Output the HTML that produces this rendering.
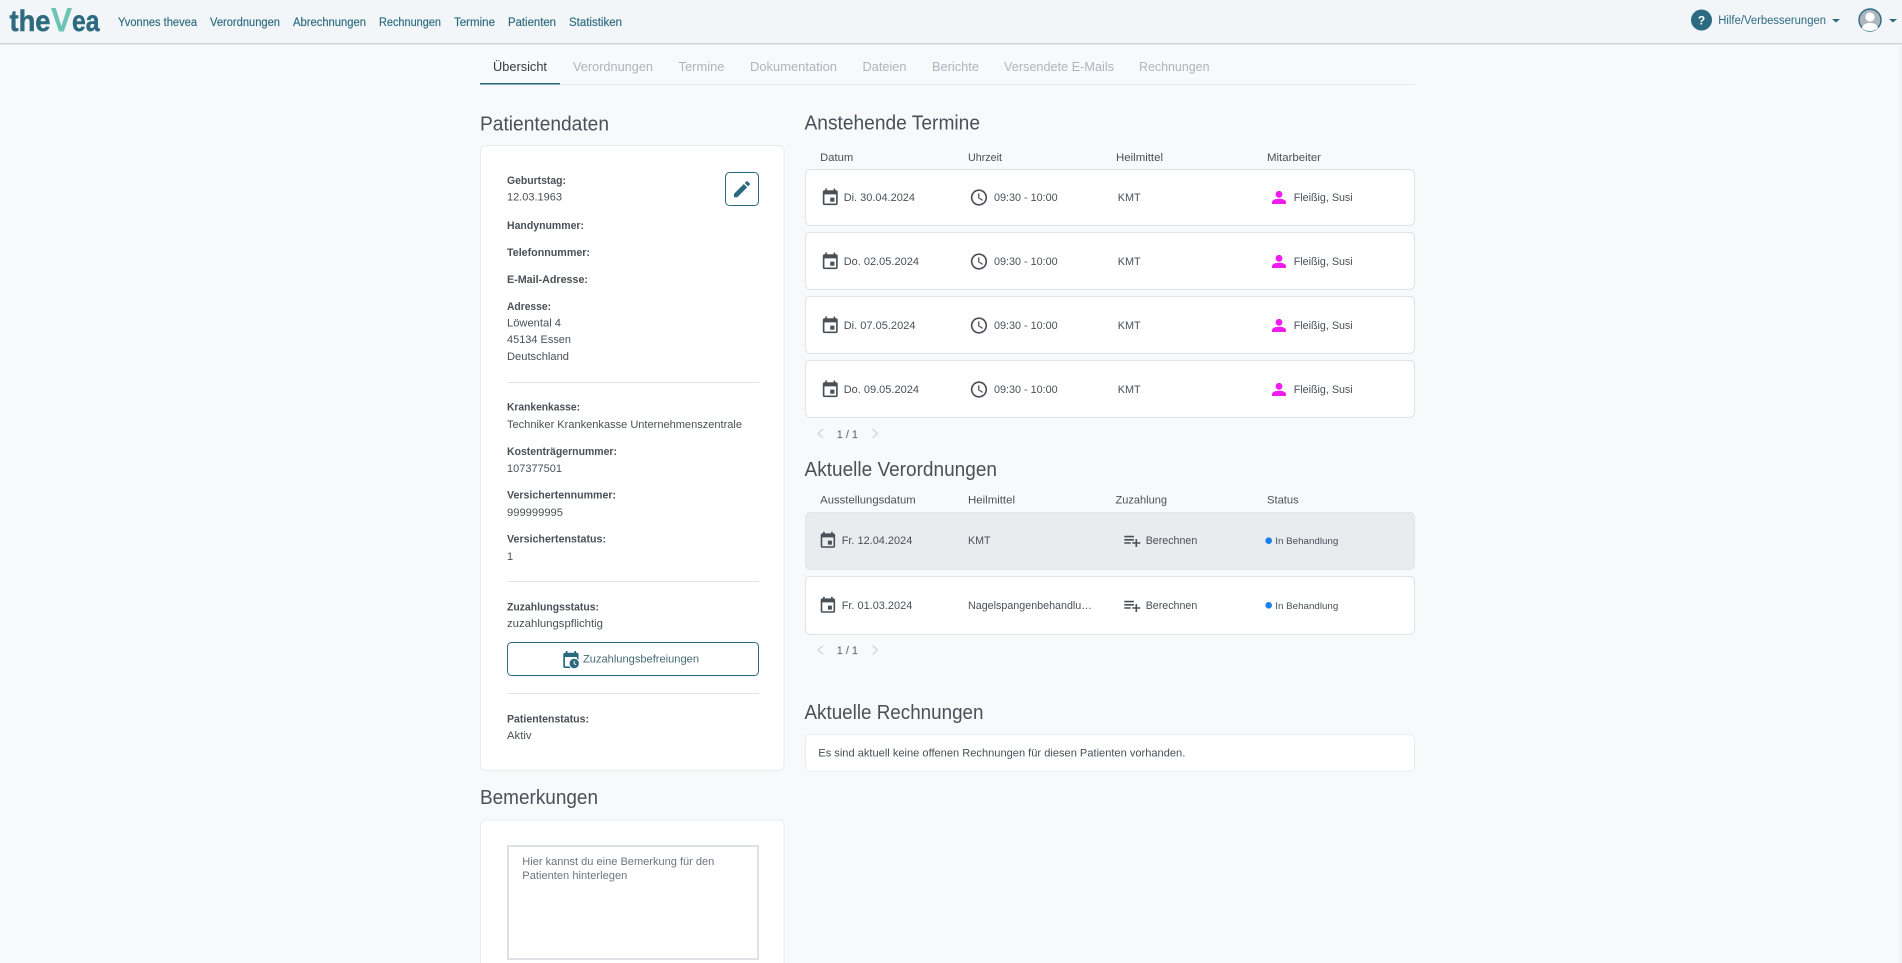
<!DOCTYPE html>
<html lang="de">
<head>
<meta charset="utf-8">
<title>thevea – Patient</title>
<style>
html,body{margin:0;padding:0;width:1902px;height:963px;overflow:hidden;background:#f8f9fb}
svg{display:block;position:absolute;left:0;top:0}
text{font-family:"Liberation Sans",sans-serif;white-space:pre}
.nav{font-size:11.5px;fill:#2b6a7e;stroke:#2b6a7e;stroke-width:.15px}
.tab{font-size:13px;fill:#adb5bd}
.h{font-size:20px;fill:#495057}
.l{font-size:11px;font-weight:bold;fill:#495057}
.v{font-size:11px;fill:#495057}
.th{font-size:11px;fill:#495057}
.pg{font-size:11px;fill:#6c757d;stroke:#6c757d;stroke-width:.15px}
.st{font-size:9.6px;fill:#495057}
.ph{font-size:11px;fill:#6c757d}
.card{fill:#fff;stroke:#e9ecef;stroke-width:1}
.row{fill:#fff;stroke:#e0e3e8;stroke-width:1}
.ic{fill:#495057}
.chev{fill:none;stroke:#ced4da;stroke-width:1.2}
</style>
</head>
<body>
<svg width="1902" height="963" viewBox="0 0 1902 963" xmlns="http://www.w3.org/2000/svg">
<rect x="0" y="0" width="1902" height="963" fill="#f8f9fb"/>
<rect x="1899" y="45" width="3" height="918" fill="#f1f3f5"/>

<!-- top nav -->
<rect x="0" y="0" width="1902" height="43" fill="#f2f6f9"/>
<rect x="0" y="43" width="1902" height="1" fill="#cfd4d8"/>
<rect x="0" y="44" width="1902" height="1" fill="#e6e9ec"/>

<text x="9.500" y="31" fill="#2e6a80" stroke="#2e6a80" stroke-width=".5" textLength="41" lengthAdjust="spacingAndGlyphs" style="font-size:30px;font-weight:bold">the</text>
<text x="51.500" y="31" fill="#6ec4b4" stroke="#6ec4b4" stroke-width="1" textLength="20" lengthAdjust="spacingAndGlyphs" style="font-size:43px">v</text>
<text x="72" y="31" fill="#2e6a80" stroke="#2e6a80" stroke-width=".5" textLength="27.500" lengthAdjust="spacingAndGlyphs" style="font-size:30px;font-weight:bold">ea</text>

<text class="nav" x="118" y="26" textLength="79" lengthAdjust="spacingAndGlyphs">Yvonnes thevea</text>
<text class="nav" x="210" y="26" textLength="70" lengthAdjust="spacingAndGlyphs">Verordnungen</text>
<text class="nav" x="293" y="26" textLength="73" lengthAdjust="spacingAndGlyphs">Abrechnungen</text>
<text class="nav" x="379" y="26" textLength="62" lengthAdjust="spacingAndGlyphs">Rechnungen</text>
<text class="nav" x="454" y="26" textLength="41" lengthAdjust="spacingAndGlyphs">Termine</text>
<text class="nav" x="508" y="26" textLength="48" lengthAdjust="spacingAndGlyphs">Patienten</text>
<text class="nav" x="569" y="26" textLength="53" lengthAdjust="spacingAndGlyphs">Statistiken</text>

<circle cx="1701.500" cy="20" r="10.500" fill="#2b6a80"/>
<text x="1701.500" y="24.500" text-anchor="middle" fill="#fff" style="font-size:12px;font-weight:bold">?</text>
<text class="nav" style="stroke:none" x="1718.300" y="24" textLength="107.700" lengthAdjust="spacingAndGlyphs">Hilfe/Verbesserungen</text>
<path d="M1832 19h8l-4 3.500z" fill="#2b6a7e"/>
<circle cx="1870" cy="20" r="11" fill="#adb5bd" stroke="#2b6a80" stroke-width="1.400"/>
<circle cx="1870" cy="17" r="4.600" fill="#fff"/>
<path d="M1862 28c1-4 4.500-5 8-5s7 1 8 5c-2 2-5 3-8 3s-6-1-8-3z" fill="#fff"/>
<path d="M1889 19h8l-4 3.500z" fill="#2b6a7e"/>

<!-- tabs -->
<rect x="480" y="84" width="935" height="1" fill="#e7e9ec"/>
<rect x="480" y="83" width="80" height="1.500" fill="#2b6a7e"/>
<text class="tab" style="fill:#343a40" x="493" y="71" textLength="54" lengthAdjust="spacingAndGlyphs">Übersicht</text>
<text class="tab" x="573" y="71" textLength="80" lengthAdjust="spacingAndGlyphs">Verordnungen</text>
<text class="tab" x="678.500" y="71" textLength="46" lengthAdjust="spacingAndGlyphs">Termine</text>
<text class="tab" x="750" y="71" textLength="87" lengthAdjust="spacingAndGlyphs">Dokumentation</text>
<text class="tab" x="862.500" y="71" textLength="44" lengthAdjust="spacingAndGlyphs">Dateien</text>
<text class="tab" x="932" y="71" textLength="47" lengthAdjust="spacingAndGlyphs">Berichte</text>
<text class="tab" x="1004" y="71" textLength="110" lengthAdjust="spacingAndGlyphs">Versendete E-Mails</text>
<text class="tab" x="1139" y="71" textLength="70.500" lengthAdjust="spacingAndGlyphs">Rechnungen</text>

<!-- Patientendaten -->
<text class="h" x="480" y="130.500" textLength="129" lengthAdjust="spacingAndGlyphs">Patientendaten</text>
<rect class="card" x="480.500" y="145.500" width="303.500" height="625" rx="5"/>

<text class="l" x="507" y="184" textLength="59" lengthAdjust="spacingAndGlyphs">Geburtstag:</text>
<text class="v" x="507" y="200.500" textLength="55" lengthAdjust="spacingAndGlyphs">12.03.1963</text>
<rect x="725.500" y="172.500" width="33" height="33" rx="4" fill="#fff" stroke="#2b6a7e" stroke-width="1"/>
<path transform="translate(731.300,178.500) scale(.89)" fill="#2b6a7e" d="M3 17.250V21h3.750L17.810 9.940l-3.750-3.750L3 17.250zM20.710 7.040c.39-.39.39-1.020 0-1.410l-2.340-2.340c-.39-.39-1.020-.39-1.410 0l-1.830 1.830 3.750 3.750 1.830-1.830z"/>
<text class="l" x="507" y="229" textLength="77" lengthAdjust="spacingAndGlyphs">Handynummer:</text>
<text class="l" x="507" y="256" textLength="83" lengthAdjust="spacingAndGlyphs">Telefonnummer:</text>
<text class="l" x="507" y="283" textLength="81" lengthAdjust="spacingAndGlyphs">E-Mail-Adresse:</text>
<text class="l" x="507" y="310" textLength="44" lengthAdjust="spacingAndGlyphs">Adresse:</text>
<text class="v" x="507" y="326.700" textLength="54" lengthAdjust="spacingAndGlyphs">Löwental 4</text>
<text class="v" x="507" y="343" textLength="64" lengthAdjust="spacingAndGlyphs">45134 Essen</text>
<text class="v" x="507" y="360" textLength="62" lengthAdjust="spacingAndGlyphs">Deutschland</text>
<rect x="507" y="382" width="252" height="1" fill="#e0e3e7"/>

<text class="l" x="507" y="410.700" textLength="73" lengthAdjust="spacingAndGlyphs">Krankenkasse:</text>
<text class="v" x="507" y="428" textLength="235" lengthAdjust="spacingAndGlyphs">Techniker Krankenkasse Unternehmenszentrale</text>
<text class="l" x="507" y="455" textLength="110" lengthAdjust="spacingAndGlyphs">Kostenträgernummer:</text>
<text class="v" x="507" y="472" textLength="55" lengthAdjust="spacingAndGlyphs">107377501</text>
<text class="l" x="507" y="498.700" textLength="109" lengthAdjust="spacingAndGlyphs">Versichertennummer:</text>
<text class="v" x="507" y="516" textLength="56" lengthAdjust="spacingAndGlyphs">999999995</text>
<text class="l" x="507" y="542.700" textLength="99" lengthAdjust="spacingAndGlyphs">Versichertenstatus:</text>
<text class="v" x="507" y="560">1</text>
<rect x="507" y="581" width="252" height="1" fill="#e0e3e7"/>

<text class="l" x="507" y="610.700" textLength="92" lengthAdjust="spacingAndGlyphs">Zuzahlungsstatus:</text>
<text class="v" x="507" y="627" textLength="96" lengthAdjust="spacingAndGlyphs">zuzahlungspflichtig</text>
<rect x="507.500" y="642.500" width="251" height="33" rx="4" fill="#fff" stroke="#2b6a7e" stroke-width="1"/>
<path transform="translate(560.700,650.200) scale(.85)" fill="#2b6a7e" d="M16 1v2H8V1H6v2H5c-1.110 0-1.990.9-1.990 2L3 19c0 1.100.89 2 2 2h14c1.100 0 2-.9 2-2V5c0-1.100-.9-2-2-2h-1V1h-2zm3 18H5V8h14v11z"/>
<circle cx="574.200" cy="663.500" r="5.200" fill="#2b6a7e" stroke="#fff" stroke-width="1"/>
<path d="M574.200 660.800v2.900l2 1" fill="none" stroke="#fff" stroke-width=".9"/>
<text class="v" style="fill:#456a78" x="583" y="662.700" textLength="116" lengthAdjust="spacingAndGlyphs">Zuzahlungsbefreiungen</text>
<rect x="507" y="693" width="252" height="1" fill="#e0e3e7"/>

<text class="l" x="507" y="722.700" textLength="82" lengthAdjust="spacingAndGlyphs">Patientenstatus:</text>
<text class="v" x="507" y="739" textLength="24.500" lengthAdjust="spacingAndGlyphs">Aktiv</text>

<!-- Bemerkungen -->
<text class="h" x="480" y="804" textLength="118" lengthAdjust="spacingAndGlyphs">Bemerkungen</text>
<rect class="card" x="480.500" y="820" width="303.500" height="160" rx="5"/>
<rect x="508" y="846" width="250" height="113" fill="#fff" stroke="#dee2e6" stroke-width="2"/>
<text class="ph" x="522.300" y="865" textLength="192" lengthAdjust="spacingAndGlyphs">Hier kannst du eine Bemerkung für den</text>
<text class="ph" x="522.300" y="879" textLength="105" lengthAdjust="spacingAndGlyphs">Patienten hinterlegen</text>

<!-- Anstehende Termine -->
<text class="h" x="804.500" y="129.500" textLength="175.500" lengthAdjust="spacingAndGlyphs">Anstehende Termine</text>
<text class="th" x="820.200" y="161" textLength="33" lengthAdjust="spacingAndGlyphs">Datum</text>
<text class="th" x="968" y="161" textLength="34" lengthAdjust="spacingAndGlyphs">Uhrzeit</text>
<text class="th" x="1116" y="161" textLength="47" lengthAdjust="spacingAndGlyphs">Heilmittel</text>
<text class="th" x="1267" y="161" textLength="54" lengthAdjust="spacingAndGlyphs">Mitarbeiter</text>

<rect class="row" x="805.500" y="169.500" width="609" height="56" rx="5"/>
<rect class="row" x="805.500" y="232.500" width="609" height="57" rx="5"/>
<rect class="row" x="805.500" y="296.500" width="609" height="57" rx="5"/>
<rect class="row" x="805.500" y="360.500" width="609" height="57" rx="5"/>

<!-- row 1 -->
<path class="ic" transform="translate(820.300,187.700) scale(.83)" d="M17 12h-5v5h5v-5zM16 1v2H8V1H6v2H5c-1.110 0-1.990.9-1.990 2L3 19c0 1.100.89 2 2 2h14c1.100 0 2-.9 2-2V5c0-1.100-.9-2-2-2h-1V1h-2zm3 18H5V8h14v11z"/>
<text class="v" x="843.700" y="201" textLength="71.300" lengthAdjust="spacingAndGlyphs">Di. 30.04.2024</text>
<path class="ic" transform="translate(969.200,187.700) scale(.815)" d="M11.990 2C6.470 2 2 6.480 2 12s4.470 10 9.990 10C17.520 22 22 17.520 22 12S17.520 2 11.990 2zM12 20c-4.420 0-8-3.580-8-8s3.580-8 8-8 8 3.580 8 8-3.580 8-8 8zm.5-13H11v6l5.250 3.150.75-1.230-4.500-2.670z"/>
<text class="v" x="994" y="201" textLength="63.700" lengthAdjust="spacingAndGlyphs">09:30 - 10:00</text>
<text class="v" x="1117.700" y="201" textLength="23" lengthAdjust="spacingAndGlyphs">KMT</text>
<circle cx="1279" cy="194.300" r="3.400" fill="#ef1cef"/>
<path d="M1272 204v-1.800c0-2.200 3-3.400 7-3.400s7 1.200 7 3.400v1.800z" fill="#ef1cef"/>
<text class="v" x="1293.700" y="201" textLength="59" lengthAdjust="spacingAndGlyphs">Fleißig, Susi</text>

<!-- row 2 -->
<path class="ic" transform="translate(820.300,251.700) scale(.83)" d="M17 12h-5v5h5v-5zM16 1v2H8V1H6v2H5c-1.110 0-1.990.9-1.990 2L3 19c0 1.100.89 2 2 2h14c1.100 0 2-.9 2-2V5c0-1.100-.9-2-2-2h-1V1h-2zm3 18H5V8h14v11z"/>
<text class="v" x="843.700" y="265" textLength="75.300" lengthAdjust="spacingAndGlyphs">Do. 02.05.2024</text>
<path class="ic" transform="translate(969.200,251.700) scale(.815)" d="M11.990 2C6.470 2 2 6.480 2 12s4.470 10 9.990 10C17.520 22 22 17.520 22 12S17.520 2 11.990 2zM12 20c-4.420 0-8-3.580-8-8s3.580-8 8-8 8 3.580 8 8-3.580 8-8 8zm.5-13H11v6l5.250 3.150.75-1.230-4.500-2.670z"/>
<text class="v" x="994" y="265" textLength="63.700" lengthAdjust="spacingAndGlyphs">09:30 - 10:00</text>
<text class="v" x="1117.700" y="265" textLength="23" lengthAdjust="spacingAndGlyphs">KMT</text>
<circle cx="1279" cy="258.300" r="3.400" fill="#ef1cef"/>
<path d="M1272 268v-1.800c0-2.200 3-3.400 7-3.400s7 1.200 7 3.400v1.800z" fill="#ef1cef"/>
<text class="v" x="1293.700" y="265" textLength="59" lengthAdjust="spacingAndGlyphs">Fleißig, Susi</text>

<!-- row 3 -->
<path class="ic" transform="translate(820.300,315.700) scale(.83)" d="M17 12h-5v5h5v-5zM16 1v2H8V1H6v2H5c-1.110 0-1.990.9-1.990 2L3 19c0 1.100.89 2 2 2h14c1.100 0 2-.9 2-2V5c0-1.100-.9-2-2-2h-1V1h-2zm3 18H5V8h14v11z"/>
<text class="v" x="843.700" y="329" textLength="71.800" lengthAdjust="spacingAndGlyphs">Di. 07.05.2024</text>
<path class="ic" transform="translate(969.200,315.700) scale(.815)" d="M11.990 2C6.470 2 2 6.480 2 12s4.470 10 9.990 10C17.520 22 22 17.520 22 12S17.520 2 11.990 2zM12 20c-4.420 0-8-3.580-8-8s3.580-8 8-8 8 3.580 8 8-3.580 8-8 8zm.5-13H11v6l5.250 3.150.75-1.230-4.500-2.670z"/>
<text class="v" x="994" y="329" textLength="63.700" lengthAdjust="spacingAndGlyphs">09:30 - 10:00</text>
<text class="v" x="1117.700" y="329" textLength="23" lengthAdjust="spacingAndGlyphs">KMT</text>
<circle cx="1279" cy="322.300" r="3.400" fill="#ef1cef"/>
<path d="M1272 332v-1.800c0-2.200 3-3.400 7-3.400s7 1.200 7 3.400v1.800z" fill="#ef1cef"/>
<text class="v" x="1293.700" y="329" textLength="59" lengthAdjust="spacingAndGlyphs">Fleißig, Susi</text>

<!-- row 4 -->
<path class="ic" transform="translate(820.300,379.700) scale(.83)" d="M17 12h-5v5h5v-5zM16 1v2H8V1H6v2H5c-1.110 0-1.990.9-1.990 2L3 19c0 1.100.89 2 2 2h14c1.100 0 2-.9 2-2V5c0-1.100-.9-2-2-2h-1V1h-2zm3 18H5V8h14v11z"/>
<text class="v" x="843.700" y="393" textLength="75.300" lengthAdjust="spacingAndGlyphs">Do. 09.05.2024</text>
<path class="ic" transform="translate(969.200,379.700) scale(.815)" d="M11.990 2C6.470 2 2 6.480 2 12s4.470 10 9.990 10C17.520 22 22 17.520 22 12S17.520 2 11.990 2zM12 20c-4.420 0-8-3.580-8-8s3.580-8 8-8 8 3.580 8 8-3.580 8-8 8zm.5-13H11v6l5.250 3.150.75-1.230-4.500-2.670z"/>
<text class="v" x="994" y="393" textLength="63.700" lengthAdjust="spacingAndGlyphs">09:30 - 10:00</text>
<text class="v" x="1117.700" y="393" textLength="23" lengthAdjust="spacingAndGlyphs">KMT</text>
<circle cx="1279" cy="386.300" r="3.400" fill="#ef1cef"/>
<path d="M1272 396v-1.800c0-2.200 3-3.400 7-3.400s7 1.200 7 3.400v1.800z" fill="#ef1cef"/>
<text class="v" x="1293.700" y="393" textLength="59" lengthAdjust="spacingAndGlyphs">Fleißig, Susi</text>

<!-- pagination 1 -->
<path class="chev" d="M823 429l-5 4.500 5 4.500"/>
<text class="pg" x="836.700" y="437.800" textLength="21.300" lengthAdjust="spacingAndGlyphs">1 / 1</text>
<path class="chev" d="M872.500 429l5 4.500-5 4.500"/>

<!-- Aktuelle Verordnungen -->
<text class="h" x="804.500" y="476" textLength="192.500" lengthAdjust="spacingAndGlyphs">Aktuelle Verordnungen</text>
<text class="th" x="820.200" y="503.700" textLength="95.500" lengthAdjust="spacingAndGlyphs">Ausstellungsdatum</text>
<text class="th" x="968" y="503.700" textLength="47" lengthAdjust="spacingAndGlyphs">Heilmittel</text>
<text class="th" x="1115.500" y="503.700" textLength="51.500" lengthAdjust="spacingAndGlyphs">Zuzahlung</text>
<text class="th" x="1267" y="503.700" textLength="31.700" lengthAdjust="spacingAndGlyphs">Status</text>

<rect x="805.500" y="512.500" width="609" height="57" rx="5" fill="#e9ecef" stroke="#e2e5e9" stroke-width="1"/>
<rect class="row" x="805.500" y="576.500" width="609" height="58" rx="5"/>

<path class="ic" transform="translate(818.300,531) scale(.8)" d="M17 12h-5v5h5v-5zM16 1v2H8V1H6v2H5c-1.110 0-1.990.9-1.990 2L3 19c0 1.100.89 2 2 2h14c1.100 0 2-.9 2-2V5c0-1.100-.9-2-2-2h-1V1h-2zm3 18H5V8h14v11z"/>
<text class="v" x="841.700" y="544" textLength="70.600" lengthAdjust="spacingAndGlyphs">Fr. 12.04.2024</text>
<text class="v" x="968" y="544" textLength="22.500" lengthAdjust="spacingAndGlyphs">KMT</text>
<path class="ic" transform="translate(1122.700,531) scale(.8)" d="M14 10H2v2h12v-2zm0-4H2v2h12V6zm4 8v-4h-2v4h-4v2h4v4h2v-4h4v-2h-4zM2 16h8v-2H2v2z"/>
<text class="v" x="1145.700" y="544" textLength="51.600" lengthAdjust="spacingAndGlyphs">Berechnen</text>
<circle cx="1268.700" cy="540.700" r="3.300" fill="#1a7fef"/>
<text class="st" x="1275.300" y="544" textLength="63" lengthAdjust="spacingAndGlyphs">In Behandlung</text>

<path class="ic" transform="translate(818.300,596) scale(.8)" d="M17 12h-5v5h5v-5zM16 1v2H8V1H6v2H5c-1.110 0-1.990.9-1.990 2L3 19c0 1.100.89 2 2 2h14c1.100 0 2-.9 2-2V5c0-1.100-.9-2-2-2h-1V1h-2zm3 18H5V8h14v11z"/>
<text class="v" x="841.700" y="609" textLength="70.600" lengthAdjust="spacingAndGlyphs">Fr. 01.03.2024</text>
<text class="v" x="968" y="609" textLength="124" lengthAdjust="spacingAndGlyphs">Nagelspangenbehandlu…</text>
<path class="ic" transform="translate(1122.700,596) scale(.8)" d="M14 10H2v2h12v-2zm0-4H2v2h12V6zm4 8v-4h-2v4h-4v2h4v4h2v-4h4v-2h-4zM2 16h8v-2H2v2z"/>
<text class="v" x="1145.700" y="609" textLength="51.600" lengthAdjust="spacingAndGlyphs">Berechnen</text>
<circle cx="1268.700" cy="605.300" r="3.300" fill="#1a7fef"/>
<text class="st" x="1275.300" y="609" textLength="63" lengthAdjust="spacingAndGlyphs">In Behandlung</text>

<!-- pagination 2 -->
<path class="chev" d="M823 645.500l-5 4.500 5 4.500"/>
<text class="pg" x="836.700" y="654" textLength="21.300" lengthAdjust="spacingAndGlyphs">1 / 1</text>
<path class="chev" d="M872.500 645.500l5 4.500-5 4.500"/>

<!-- Aktuelle Rechnungen -->
<text class="h" x="804.500" y="719" textLength="179" lengthAdjust="spacingAndGlyphs">Aktuelle Rechnungen</text>
<rect class="card" x="805.500" y="734.500" width="609" height="37" rx="5"/>
<text class="v" x="818.300" y="756.700" textLength="367" lengthAdjust="spacingAndGlyphs">Es sind aktuell keine offenen Rechnungen für diesen Patienten vorhanden.</text>
</svg>
</body>
</html>
